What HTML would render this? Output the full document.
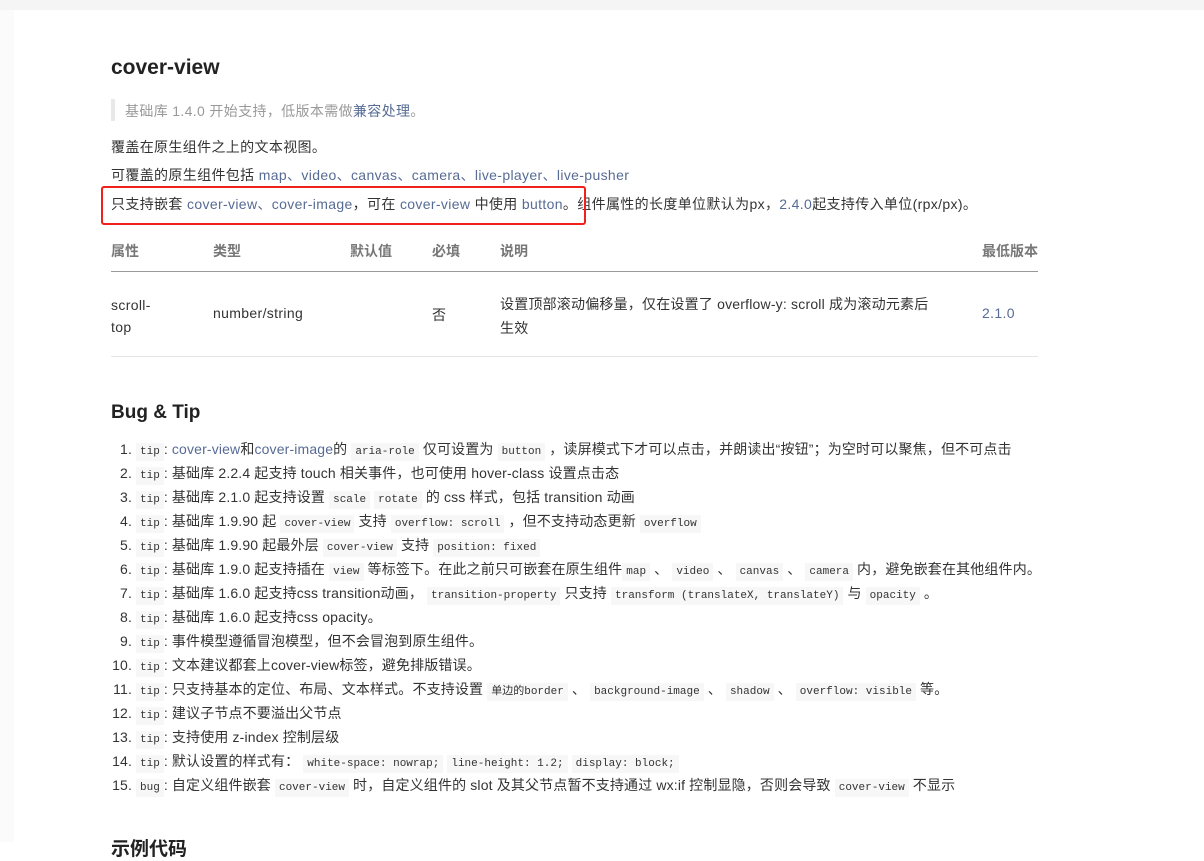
<!DOCTYPE html>
<html><head><meta charset="utf-8"><style>
*{margin:0;padding:0;box-sizing:border-box}
body{width:1204px;height:842px;overflow:hidden;background:#fff;font-family:"Liberation Sans","Noto Sans CJK SC",sans-serif;font-size:14px;color:#333;position:relative}
.top{position:absolute;left:0;top:0;width:1204px;height:10px;background:#f5f5f5}
.left{position:absolute;left:0;top:10px;width:14px;height:832px;background:#fbfbfb}
.a{position:absolute;white-space:nowrap}
.p{letter-spacing:0.35px}
.l{color:#576b95}
h1{position:absolute;left:111px;top:56px;font-size:21px;font-weight:bold;color:#222}
h2{position:absolute;left:111px;top:402px;font-size:19px;font-weight:bold;color:#222}
code{font-family:"Liberation Mono","DejaVu Sans Mono",monospace;font-size:11px;background:#f7f7f7;padding:3px 4px;color:#333;letter-spacing:0}
.li{position:absolute;left:108px;height:24px;line-height:24px;white-space:nowrap;letter-spacing:0.15px}
.n{display:inline-block;width:24px;text-align:right;margin-right:4px}
.th{position:absolute;top:241px;color:#777;font-weight:bold;font-size:14px}
</style></head><body>
<div class="top"></div><div class="left"></div>
<h1>cover-view</h1>
<div style="position:absolute;left:111px;top:99px;width:4px;height:22px;background:#e8e8e8"></div>
<div class="a p" style="left:125px;top:101px;color:#999">基础库 1.4.0 开始支持，低版本需做<span class="l">兼容处理</span>。</div>
<div class="a p" style="left:111px;top:137px">覆盖在原生组件之上的文本视图。</div>
<div class="a p" style="left:111px;top:165px">可覆盖的原生组件包括 <span class="l">map、video、canvas、camera、live-player、live-pusher</span></div>
<div class="a p" style="left:111px;top:194px">只支持嵌套 <span class="l">cover-view、cover-image</span>，可在 <span class="l">cover-view</span> 中使用 <span class="l">button</span>。组件属性的长度单位默认为px，<span class="l">2.4.0</span>起支持传入单位(rpx/px)。</div>
<div style="position:absolute;left:101px;top:186px;width:485px;height:39px;border:2px solid #f0201c;border-radius:3px"></div>
<div class="th" style="left:111px">属性</div><div class="th" style="left:213px">类型</div><div class="th" style="left:350px">默认值</div><div class="th" style="left:432px">必填</div><div class="th" style="left:500px">说明</div><div class="th" style="left:982px">最低版本</div>
<div style="position:absolute;left:111px;top:271px;width:927px;height:1px;background:#999"></div>
<div class="a p" style="left:111px;top:294px;line-height:22px">scroll-<br>top</div>
<div class="a p" style="left:213px;top:305px">number/string</div>
<div class="a" style="left:432px;top:305px">否</div>
<div class="a p" style="left:500px;top:292px;line-height:24px;letter-spacing:0.2px">设置顶部滚动偏移量，仅在设置了 overflow-y: scroll 成为滚动元素后<br>生效</div>
<div class="a l p" style="left:982px;top:305px">2.1.0</div>
<div style="position:absolute;left:111px;top:356px;width:927px;height:1px;background:#e5e5e5"></div>
<h2>Bug &amp; Tip</h2>
<div class="li" style="top:437px"><span class="n">1.</span><code>tip</code>: <span class="l">cover-view</span>和<span class="l">cover-image</span>的 <code>aria-role</code> 仅可设置为 <code>button</code> ，读屏模式下才可以点击，并朗读出“按钮”；为空时可以聚焦，但不可点击</div>
<div class="li" style="top:461px"><span class="n">2.</span><code>tip</code>: 基础库 2.2.4 起支持 touch 相关事件，也可使用 hover-class 设置点击态</div>
<div class="li" style="top:485px"><span class="n">3.</span><code>tip</code>: 基础库 2.1.0 起支持设置 <code>scale</code> <code>rotate</code> 的 css 样式，包括 transition 动画</div>
<div class="li" style="top:509px"><span class="n">4.</span><code>tip</code>: 基础库 1.9.90 起 <code>cover-view</code> 支持 <code>overflow: scroll</code> ，但不支持动态更新 <code>overflow</code></div>
<div class="li" style="top:533px"><span class="n">5.</span><code>tip</code>: 基础库 1.9.90 起最外层 <code>cover-view</code> 支持 <code>position: fixed</code></div>
<div class="li" style="top:557px"><span class="n">6.</span><code>tip</code>: 基础库 1.9.0 起支持插在 <code>view</code> 等标签下。在此之前只可嵌套在原生组件<code>map</code> 、 <code>video</code> 、 <code>canvas</code> 、 <code>camera</code> 内，避免嵌套在其他组件内。</div>
<div class="li" style="top:581px"><span class="n">7.</span><code>tip</code>: 基础库 1.6.0 起支持css transition动画， <code>transition-property</code> 只支持 <code>transform (translateX, translateY)</code> 与 <code>opacity</code> 。</div>
<div class="li" style="top:605px"><span class="n">8.</span><code>tip</code>: 基础库 1.6.0 起支持css opacity。</div>
<div class="li" style="top:629px"><span class="n">9.</span><code>tip</code>: 事件模型遵循冒泡模型，但不会冒泡到原生组件。</div>
<div class="li" style="top:653px"><span class="n">10.</span><code>tip</code>: 文本建议都套上cover-view标签，避免排版错误。</div>
<div class="li" style="top:677px"><span class="n">11.</span><code>tip</code>: 只支持基本的定位、布局、文本样式。不支持设置 <code>单边的border</code> 、 <code>background-image</code> 、 <code>shadow</code> 、 <code>overflow: visible</code> 等。</div>
<div class="li" style="top:701px"><span class="n">12.</span><code>tip</code>: 建议子节点不要溢出父节点</div>
<div class="li" style="top:725px"><span class="n">13.</span><code>tip</code>: 支持使用 z-index 控制层级</div>
<div class="li" style="top:749px"><span class="n">14.</span><code>tip</code>: 默认设置的样式有： <code>white-space: nowrap;</code> <code>line-height: 1.2;</code> <code>display: block;</code></div>
<div class="li" style="top:773px"><span class="n">15.</span><code>bug</code>: 自定义组件嵌套 <code>cover-view</code> 时，自定义组件的 slot 及其父节点暂不支持通过 wx:if 控制显隐，否则会导致 <code>cover-view</code> 不显示</div>
<div class="a" style="left:111px;top:834px;font-size:19px;font-weight:bold;color:#222">示例代码</div>
</body></html>
